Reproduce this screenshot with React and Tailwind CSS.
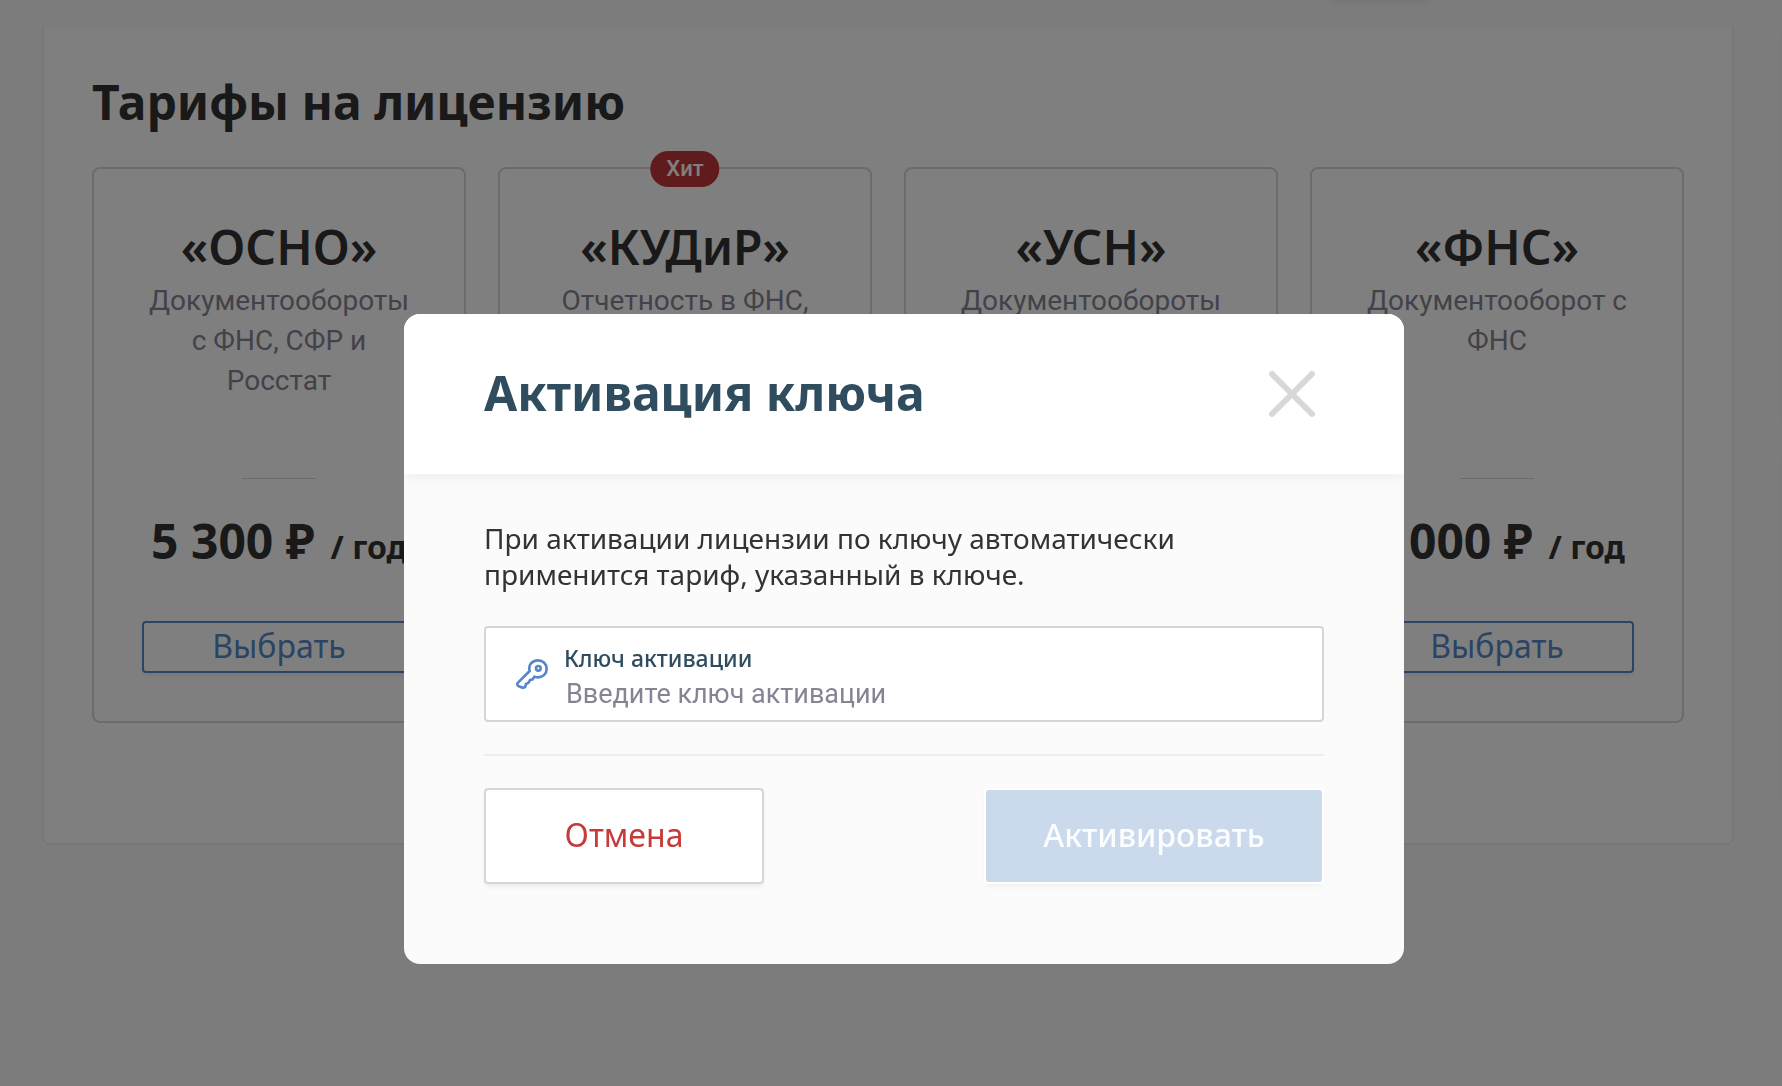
import React from "react";

const plans = [
  { name: "«ОСНО»", text: "Документообороты с ФНС, СФР и Росстат", price: "5 300 ₽" },
  { name: "«КУДиР»", text: "Отчетность в ФНС,", hit: true },
  { name: "«УСН»", text: "Документообороты" },
  { name: "«ФНС»", text: "Документооборот с ФНС", price: "2 000 ₽" },
];

function KeyIcon() {
  return (
    <svg
      viewBox="0 0 96 90"
      className="h-[30px] w-8 shrink-0"
      fill="none"
      stroke="#5688c9"
      strokeWidth="8"
      strokeLinecap="round"
      strokeLinejoin="round"
      aria-hidden="true"
    >
      <path d="M41 36C36 18 48 4 66 4c15 0 26 11 26 25 0 15-11 26-26 26-4 0-8-1-11-2l-5 8-8 2-4 8-8 4-2 8c-4 5-8 3-12 2l-9-4c-4-2-4-6-1-10Z" />
      <circle cx="67" cy="28" r="7" />
    </svg>
  );
}

function CloseIcon() {
  return (
    <svg viewBox="0 0 48 48" className="size-12" fill="none" stroke="#d8d8d8" strokeWidth="6" strokeLinecap="round" aria-hidden="true">
      <path d="M4 4l40 40M44 4L4 44" />
    </svg>
  );
}

function PlanCard({ plan }) {
  return (
    <article className="relative flex flex-col items-center rounded-lg border-2 border-[#d6d6d6] bg-white p-12 text-center">
      {plan.hit && (
        <span className="absolute -top-[18px] left-1/2 flex h-9 -translate-x-1/2 items-center rounded-full bg-[#c03838] px-4 pb-0.5 font-[Roboto,sans-serif] text-[22px] font-medium text-white">
          Хит
        </span>
      )}
      <h2 className="text-5xl/[60px] font-semibold text-[#333]">{plan.name}</h2>
      <p className="mt-1 h-40 font-[Roboto,sans-serif] text-[28px]/10 text-[#868494]">{plan.text}</p>
      <hr className="mt-[37px] w-[74px] border-[#d6d6d6]" />
      <p className="mt-8 flex h-[60px] items-baseline gap-4 whitespace-nowrap text-5xl/[60px] font-bold text-[#333]">
        {plan.price}
        {plan.price && <span className="text-[32px]">/ год</span>}
      </p>
      <button
        type="button"
        className="mt-[50px] flex h-[52px] w-full items-center justify-center rounded border-2 border-[#5688c9] pb-0.5 text-[32px] text-[#5688c9] shadow-md shadow-black/5"
      >
        Выбрать
      </button>
    </article>
  );
}

function ActivationDialog() {
  return (
    <div className="fixed inset-0 flex items-start justify-center bg-black/50 pt-[314px] pl-[26px]">
      <section
        role="dialog"
        aria-modal="true"
        aria-labelledby="dialog-title"
        className="w-[1000px] max-w-full overflow-hidden rounded-2xl bg-[#fbfbfb]"
      >
        <header className="flex h-40 items-center justify-between bg-white px-20 shadow-[0_4px_12px_rgba(0,0,0,0.05)]">
          <h1 id="dialog-title" className="pb-0.5 text-5xl/[64px] font-bold text-[#2f4d5f]">
            Активация ключа
          </h1>
          <button type="button" aria-label="Закрыть" className="mr-2">
            <CloseIcon />
          </button>
        </header>
        <div className="px-20 pt-[46px] pb-20">
          <p className="text-[28px]/9 text-[#333]">
            При активации лицензии по ключу автоматически применится тариф, указанный в ключе.
          </p>
          <div className="mt-[34px] flex h-24 items-center rounded border-2 border-[#d6d6d6] bg-white pr-6 pl-[30px]">
            <KeyIcon />
            <div className="ml-4 flex flex-1 flex-col pt-2">
              <label htmlFor="activation-key" className="text-[23px]/7 font-medium text-[#2f4d5f]">
                Ключ активации
              </label>
              <input
                id="activation-key"
                type="text"
                placeholder="Введите ключ активации"
                className="mt-1 h-9 w-full bg-transparent pl-0.5 font-[Roboto,sans-serif] text-[27px] outline-none placeholder:text-[#868494]"
              />
            </div>
          </div>
          <hr className="mt-8 border-t-2 border-[#ededed]" />
          <div className="mt-8 flex justify-between text-[32px]">
            <button
              type="button"
              className="h-24 w-[280px] rounded border-2 border-[#d6d6d6] bg-white pb-0.5 text-[#c63a3a] shadow-md shadow-black/5"
            >
              Отмена
            </button>
            <button
              type="button"
              disabled
              className="h-24 w-[340px] rounded border-2 border-white bg-[#cad9ec] bg-clip-padding pb-0.5 font-medium text-[#fcfdfe] shadow-md shadow-black/3"
            >
              Активировать
            </button>
          </div>
        </div>
      </section>
    </div>
  );
}

export default function App() {
  return (
    <div className="relative min-h-screen overflow-hidden bg-[#f9f9f9] pt-[27px] pr-12 pl-[42px] font-['Noto_Sans',sans-serif]">
      <div className="absolute right-[342px] bottom-full h-10 w-[120px] rounded-full shadow-[0_2px_8px_rgba(0,0,0,0.08)]" />
      <div className="absolute top-9 left-full h-96 w-10 shadow-[0_0_10px_rgba(0,0,0,0.06)]" />
      <div className="absolute top-[460px] left-full h-[340px] w-10 shadow-[0_0_10px_rgba(0,0,0,0.06)]" />
      <main className="rounded-b-lg border-2 border-t-0 border-[#efefef] bg-white px-12 pt-[43px] pb-[120px]">
        <h1 className="text-5xl/[64px] font-bold text-[#333]">Тарифы на лицензию</h1>
        <div className="mt-[33px] grid grid-cols-4 gap-8">
          {plans.map((plan) => (
            <PlanCard key={plan.name} plan={plan} />
          ))}
        </div>
      </main>
      <ActivationDialog />
    </div>
  );
}
